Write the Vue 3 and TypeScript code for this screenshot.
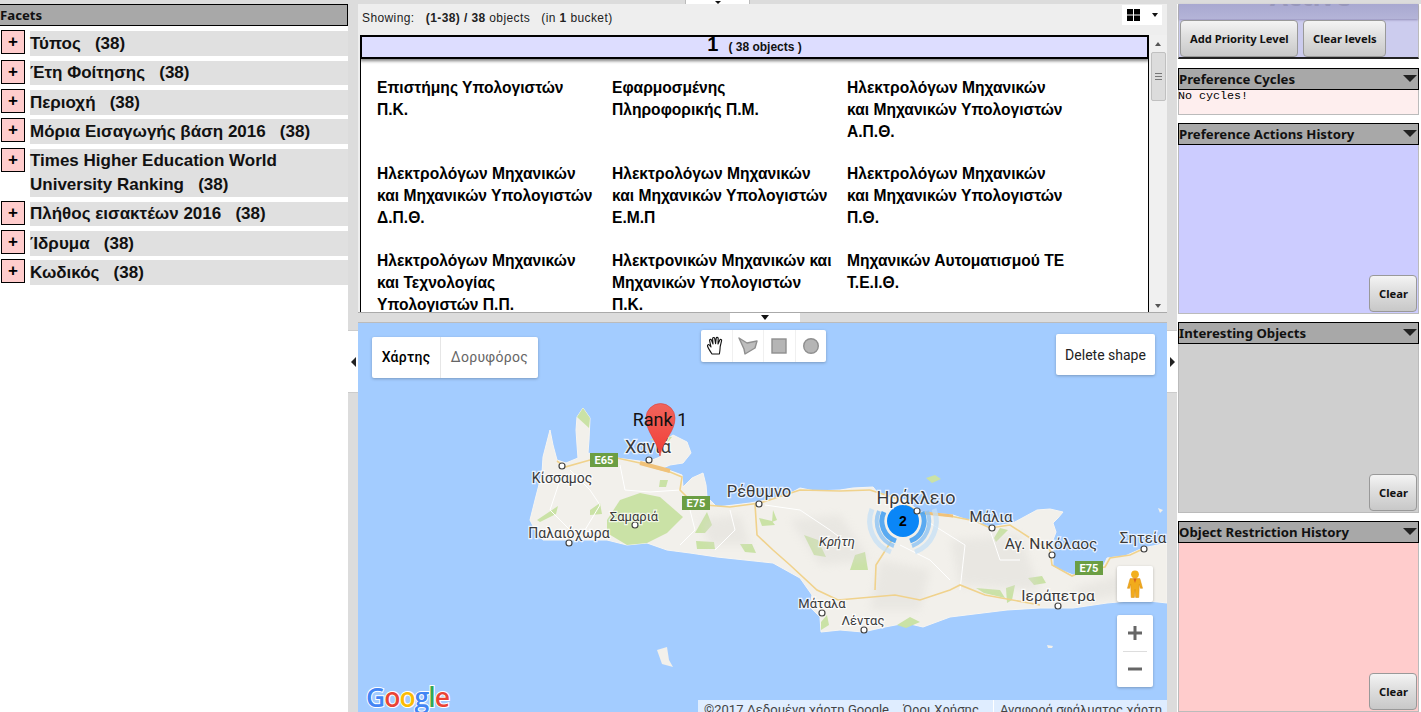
<script setup lang="ts">
interface Facet { name: string; count: number }
interface MapLabel { text: string; x: number; y: number; size: number; italic?: boolean }

const facets: Facet[] = [
  { name: 'Τύπος', count: 38 },
  { name: 'Έτη Φοίτησης', count: 38 },
  { name: 'Περιοχή', count: 38 },
  { name: 'Μόρια Εισαγωγής βάση 2016', count: 38 },
  { name: 'Times Higher Education World University Ranking', count: 38 },
  { name: 'Πλήθος εισακτέων 2016', count: 38 },
  { name: 'Ίδρυμα', count: 38 },
  { name: 'Κωδικός', count: 38 },
]

const objects: string[] = [
  'Επιστήμης Υπολογιστών Π.Κ.',
  'Εφαρμοσμένης Πληροφορικής Π.Μ.',
  'Ηλεκτρολόγων Μηχανικών και Μηχανικών Υπολογιστών Α.Π.Θ.',
  'Ηλεκτρολόγων Μηχανικών και Μηχανικών Υπολογιστών Δ.Π.Θ.',
  'Ηλεκτρολόγων Μηχανικών και Μηχανικών Υπολογιστών Ε.Μ.Π',
  'Ηλεκτρολόγων Μηχανικών και Μηχανικών Υπολογιστών Π.Θ.',
  'Ηλεκτρολόγων Μηχανικών και Τεχνολογίας Υπολογιστών Π.Π.',
  'Ηλεκτρονικών Μηχανικών και Μηχανικών Υπολογιστών Π.Κ.',
  'Μηχανικών Αυτοματισμού ΤΕ Τ.Ε.Ι.Θ.',
]

const crete =
  'M550 430 L553 445 L557 460 L566 463 L578 458 L577 445 L576 430 L577 417 L583 408 L590 418 L589 440 L588 453 L600 456 L617 458 L647 462 L660 457 L663 442 L673 435 L687 442 L691 453 L683 463 L670 465 L663 468 L682 475 L683 487 L692 478 L703 473 L706 485 L707 497 L717 507 L750 503 L783 497 L800 488 L815 491 L840 490 L853 488 L873 487 L878 493 L890 496 L905 500 L920 512 L953 515 L973 522 L990 527 L1013 523 L1037 510 L1050 509 L1063 512 L1058 518 L1053 523 L1056 532 L1053 540 L1053 567 L1073 575 L1103 567 L1107 558 L1125 556 L1143 548 L1167 543 L1167 603 L1140 600 L1107 603 L1073 608 L1040 608 L1007 610 L950 617 L923 627 L906 623 L885 627 L863 632 L840 630 L821 632 L820 617 L810 607 L812 595 L800 578 L773 563 L745 560 L717 557 L690 553 L667 550 L647 543 L627 545 L607 540 L570 540 L543 540 L535 530 L530 520 L535 500 L542 473 L543 457 Z'

const shades: string[] = [
  'M700 520 L740 515 L750 545 L710 545 Z',
  'M790 520 L840 515 L870 560 L820 565 Z',
  'M950 540 L1020 535 L1040 590 L960 585 Z',
  'M1070 590 L1120 575 L1150 590 L1090 600 Z',
  'M880 560 L930 570 L920 610 L870 610 Z',
]

const greens: string[] = [
  'M577 417 L583 408 L590 418 L589 428 Z',
  'M607 520 L620 500 L640 493 L660 497 L683 517 L667 533 L647 543 L627 545 L607 533 Z',
  'M537 520 L558 506 L556 514 L540 522 Z',
  'M590 510 L600 503 L602 514 L590 515 Z',
  'M660 480 L668 480 L666 487 L659 487 Z',
  'M695 533 L707 512 L712 525 L705 533 Z',
  'M696 541 L714 542 L715 549 L697 549 Z',
  'M740 544 L752 544 L756 553 L745 552 Z',
  'M804 535 L818 540 L826 557 L814 555 Z',
  'M759 518 L772 521 L775 525 L762 526 Z',
  'M773 510 L777 520 L772 522 Z',
  'M926 478 L935 475 L941 479 L932 483 Z',
  'M855 555 L865 552 L868 570 L850 570 Z',
  'M976 588 L1000 590 L1005 598 L984 593 Z',
  'M1006 588 L1015 585 L1012 600 L1007 603 Z',
  'M1028 578 L1042 576 L1046 583 L1034 585 Z',
  'M1008 530 L1000 528 L994 538 L996 542 Z',
  'M897 625 L910 617 L920 622 L906 628 Z',
  'M821 630 L821 622 L827 615 L829 625 Z',
  'M650 440 L660 435 L672 437 L668 442 Z',
]

const roads: string[] = [
  'M557 461 L565 467 L590 460 L617 458 L640 463 L655 468 L670 472 L682 477 L680 490 L690 500 L705 505 L730 507 L760 503 L800 490 L840 491 L870 490',
  'M870 490 L895 498 L920 513 L950 516 L975 521 L990 528 L1010 525 L1030 538 L1050 550 L1052 565 L1072 576 L1085 570',
  'M1085 570 L1105 567 L1110 558 L1130 555 L1145 548',
  'M755 504 L757 535 L773 550 L790 565 L817 590 L838 600 L895 595 L920 600 L950 590 L960 585 L985 595 L1040 605',
  'M892 540 L876 565 L875 590',
]

const whites: string[] = [
  'M570 470 L590 490 L600 505 L585 530',
  'M620 465 L625 490 L650 492 L680 490',
  'M690 510 L695 530 L680 545',
  'M730 510 L735 530 L715 550',
  'M765 505 L800 510 L830 530 L850 545',
  'M925 520 L965 545 L960 590',
  'M990 530 L1000 560 L1020 560',
  'M900 545 L930 560 L950 580',
  'M560 480 L550 510 L570 530',
]

const labels: MapLabel[] = [
  { text: 'Χανιά', x: 648, y: 453, size: 18 },
  { text: 'Κίσσαμος', x: 562, y: 483, size: 14 },
  { text: 'Ρέθυμνο', x: 759, y: 497, size: 16.5 },
  { text: 'Σαμαριά', x: 634, y: 521, size: 13 },
  { text: 'Παλαιόχωρα', x: 569, y: 538, size: 14 },
  { text: 'Κρήτη', x: 837, y: 546, size: 13, italic: true },
  { text: 'Ηράκλειο', x: 916, y: 504, size: 18 },
  { text: 'Μάλια', x: 991, y: 522, size: 15 },
  { text: 'Αγ. Νικόλαος', x: 1051, y: 549, size: 15.5 },
  { text: 'Σητεία', x: 1143, y: 543, size: 15 },
  { text: 'Ιεράπετρα', x: 1058, y: 601, size: 15.5 },
  { text: 'Μάταλα', x: 822, y: 608, size: 13 },
  { text: 'Λέντας', x: 863, y: 625, size: 13 },
]

const dots: [number, number][] = [
  [649, 460], [562, 466], [759, 504], [635, 525], [569, 543], [917, 511],
  [992, 528], [1052, 555], [1144, 549], [1058, 606], [822, 613], [864, 630],
]

const shields: { x: number; y: number }[] = [
  { x: 590, y: 453 },
  { x: 682, y: 496 },
  { x: 1075, y: 561 },
]
</script>

<template>
  <div class="page">
    <aside class="facets">
      <div class="bar">Facets</div>
      <div v-for="f in facets" :key="f.name" class="facet">
        <button class="plus">+</button>
        <div class="facet-name">{{ f.name }}&nbsp;&nbsp; ({{ f.count }})</div>
      </div>
    </aside>

    <div class="gutter">
      <div class="gutter-tab"><span class="arrow-left"></span></div>
    </div>

    <main class="center">
      <div class="top-tab"><span class="arrow-down"></span></div>
      <div class="results-head">
        <span>Showing:&nbsp;&nbsp; <b>(1-38) / 38</b> objects &nbsp; (in <b>1</b> bucket)</span>
        <div class="view-switch">
          <svg width="13" height="12" viewBox="0 0 13 12">
            <path d="M0 0h6v5.5H0zM7 0h6v5.5H7zM0 6.5h6V12H0zM7 6.5h6V12H7z" fill="#000" />
          </svg>
          <span class="arrow-down"></span>
        </div>
      </div>
      <div class="results">
        <div class="results-main">
          <div class="bucket">
            <span class="bucket-num">1</span>
            <span class="bucket-count">( 38 objects )</span>
          </div>
          <div class="objects">
            <div v-for="o in objects" :key="o" class="object">{{ o }}</div>
          </div>
        </div>
        <div class="scrollbar">
          <span class="sb-up"></span>
          <div class="sb-thumb"><i></i><i></i><i></i></div>
          <span class="sb-down"></span>
        </div>
      </div>
      <div class="split">
        <div class="split-tab"><span class="arrow-down"></span></div>
      </div>

      <div class="map">
        <svg class="map-canvas" width="809" height="389" viewBox="358 323 809 389">
          <defs>
            <filter id="soft" x="-5%" y="-5%" width="110%" height="110%">
              <feGaussianBlur stdDeviation="0.7" />
            </filter>
            <filter id="softer" x="-20%" y="-20%" width="140%" height="140%">
              <feGaussianBlur stdDeviation="4" />
            </filter>
            <linearGradient id="pin" x1="0" y1="0" x2="0" y2="1">
              <stop offset="0" stop-color="#f0645c" />
              <stop offset="1" stop-color="#f23e36" />
            </linearGradient>
          </defs>

          <g filter="url(#soft)">
            <path :d="crete" fill="#f2f0eb" stroke="#f7f5f1" stroke-width="1" stroke-linejoin="round" />
            <path d="M657 650 L667 647 L669 660 L673 667 L662 664 Z" fill="#f2f0eb" />
            <path d="M1047 645 L1053 646 L1052 648 L1048 648 Z" fill="#f2f0eb" />
            <path d="M1158 508 L1163 510 L1160 513 Z" fill="#f2f0eb" />
            <path v-for="g in greens" :key="g" :d="g" fill="#cae2a6" />
          </g>
          <g filter="url(#softer)" opacity=".4">
            <path v-for="s in shades" :key="s" :d="s" fill="#dcdad5" />
          </g>
          <path v-for="w in whites" :key="w" :d="w" fill="none" stroke="#fff" stroke-width="1" />
          <path v-for="r in roads" :key="r" :d="r" fill="none" stroke="#f0d28c" stroke-width="1.6" />
          <path d="M640 463 L670 471" fill="none" stroke="#f0c27a" stroke-width="4" />
          <path d="M925 513 L953 516" fill="none" stroke="#f0c27a" stroke-width="3" />

          <g fill="none">
            <path d="M896 541 A 21 21 0 0 1 884 512 M922 512 A 21 21 0 0 1 910 541" stroke="#3f9df2" stroke-width="5" opacity=".85" />
            <path d="M894 546 A 26 26 0 0 1 879 511 M927 511 A 26 26 0 0 1 912 546" stroke="#8cc3f4" stroke-width="4" opacity=".8" />
            <path d="M891 552 A 33 33 0 0 1 872 509 M934 509 A 33 33 0 0 1 915 552" stroke="#c6e0f6" stroke-width="5" opacity=".75" />
          </g>
          <circle cx="903" cy="521" r="16" fill="#0a86f7" />
          <text x="903" y="526" class="cluster">2</text>

          <g v-for="s in shields" :key="s.x">
            <rect :x="s.x" :y="s.y" width="28" height="14" fill="#6b9e43" />
            <text :x="s.x + 14" :y="s.y + 11" class="shield-text">{{ s.x === 590 ? 'E65' : 'E75' }}</text>
          </g>
          <circle v-for="d in dots" :key="d[0]" :cx="d[0]" :cy="d[1]" r="3" fill="#fff" stroke="#444" stroke-width="1.2" />
          <text
            v-for="l in labels"
            :key="l.text"
            class="map-label"
            :x="l.x"
            :y="l.y"
            :font-size="l.size"
            :font-style="l.italic ? 'italic' : 'normal'"
          >{{ l.text }}</text>

          <path d="M660 456 C657 440 646 432 646 418 A14.5 14.5 0 0 1 675 418 C675 432 663 440 660 456 Z" fill="url(#pin)" stroke="#d8403a" stroke-width="0.6" />
          <text x="660" y="426" class="rank">Rank 1</text>

          <text x="366" y="707" class="google">
            <tspan fill="#4285f4">G</tspan><tspan fill="#ea4335">o</tspan><tspan fill="#fbbc05">o</tspan><tspan fill="#4285f4">g</tspan><tspan fill="#34a853">l</tspan><tspan fill="#ea4335">e</tspan>
          </text>
        </svg>

        <div class="map-type">
          <div class="map-type-item active">Χάρτης</div>
          <div class="map-type-item">Δορυφόρος</div>
        </div>

        <div class="draw-tools">
          <div class="tool">
            <svg width="20" height="22" viewBox="0 0 20 22" fill="#fff" stroke="#111" stroke-width="1.1" stroke-linejoin="round">
              <path d="M6 19 C4 16 2 13 1.5 11 C1.2 9.5 2.6 9.2 3.5 10.2 L5 12 L3.6 5.6 C3.3 4.2 5 3.8 5.5 5.2 L7 9 L6.6 3.6 C6.5 2.2 8.4 2 8.7 3.4 L9.6 8.6 L10.2 3.2 C10.4 1.9 12.2 2.1 12.2 3.5 L12 9 L13.8 5 C14.4 3.8 16 4.4 15.6 5.7 L14.2 11.5 C14 14 14 16 13.4 19 Z" />
            </svg>
          </div>
          <div class="tool">
            <svg width="20" height="18" viewBox="0 0 20 18">
              <path d="M1 1 L9 6 L19 4 L17 11 L7 17 L6 12 Z" fill="#bdbdbd" stroke="#8f8f8f" stroke-width="1.4" stroke-linejoin="round" />
            </svg>
          </div>
          <div class="tool">
            <svg width="16" height="16" viewBox="0 0 16 16">
              <rect x="1" y="1" width="14" height="14" fill="#b5b5b5" stroke="#8f8f8f" stroke-width="1.4" />
            </svg>
          </div>
          <div class="tool">
            <svg width="18" height="18" viewBox="0 0 18 18">
              <circle cx="9" cy="9" r="7.3" fill="#b5b5b5" stroke="#8f8f8f" stroke-width="1.4" />
            </svg>
          </div>
        </div>

        <div class="delete-shape">Delete shape</div>

        <div class="pegman">
          <svg width="18" height="28" viewBox="0 0 16 26">
            <circle cx="8" cy="4" r="3.6" fill="#f2b01e" />
            <path d="M3.5 8 H12.5 L15 17 H13 L12 13 L11.5 25.5 H8.6 L8 18 L7.4 25.5 H4.5 L4 13 L3 17 H1 Z" fill="#f2ab1c" stroke="#d98f10" stroke-width=".5" />
            <path d="M6.5 8 L8 12 L9.5 8 Z" fill="#d9641e" />
          </svg>
        </div>

        <div class="zoom-ctl">
          <div class="zoom-btn">
            <svg width="14" height="14" viewBox="0 0 14 14"><path d="M5.5 0h3v5.5H14v3H8.5V14h-3V8.5H0v-3h5.5z" fill="#666" /></svg>
          </div>
          <div class="zoom-sep"></div>
          <div class="zoom-btn">
            <svg width="14" height="14" viewBox="0 0 14 14"><path d="M0 5.5h14v3H0z" fill="#666" /></svg>
          </div>
        </div>

        <div class="attribution">
          <span>©2017 Δεδομένα χάρτη Google</span>
          <span>Όροι Χρήσης</span>
          <span class="report">Αναφορά σφάλματος χάρτη</span>
        </div>
      </div>
    </main>

    <div class="gutter">
      <div class="gutter-tab"><span class="arrow-right"></span></div>
    </div>

    <aside class="side">
      <section class="levels">
        <div class="levels-head"><span class="ghost">Active</span></div>
        <div class="levels-btns">
          <button class="btn">Add Priority Level</button>
          <button class="btn">Clear levels</button>
        </div>
      </section>

      <section class="panel cycles">
        <div class="bar">Preference Cycles<span class="bar-arrow"></span></div>
        <div class="panel-body"><pre>No cycles!</pre></div>
      </section>

      <section class="panel actions">
        <div class="bar">Preference Actions History<span class="bar-arrow"></span></div>
        <div class="panel-body"><button class="btn clear">Clear</button></div>
      </section>

      <section class="panel interesting">
        <div class="bar">Interesting Objects<span class="bar-arrow"></span></div>
        <div class="panel-body"><button class="btn clear">Clear</button></div>
      </section>

      <section class="panel restriction">
        <div class="bar">Object Restriction History<span class="bar-arrow"></span></div>
        <div class="panel-body"><button class="btn clear">Clear</button></div>
      </section>
    </aside>
  </div>
</template>

<style>
html, body { margin: 0; overflow: hidden; background: #fff; }
</style>

<style scoped>
* { box-sizing: border-box; }

.page {
  display: grid;
  grid-template-columns: 348px 10px 809px 10px 242px 2px;
  height: 712px;
  width: 1421px;
  overflow: hidden;
  padding-top: 4px;
  background: #fff;
  font-family: "Liberation Sans", Arial, sans-serif;
  color: #000;
  position: relative;
}
.page::before {
  content: "";
  position: absolute;
  left: 0;
  right: 0;
  top: 0;
  height: 4px;
  background: #dcdcdc;
}

.bar {
  height: 22px;
  border: 1px solid #000;
  background: #a8a8a8;
  font: bold 13.2px/20px "Noto Sans", sans-serif;
  color: #111;
  position: relative;
}
.bar-arrow {
  position: absolute;
  right: 1px;
  top: 6px;
  border-left: 7px solid transparent;
  border-right: 7px solid transparent;
  border-top: 7px solid #222;
}

.facets {
  display: flex;
  flex-direction: column;
}
.facets .bar { border-left: 0; margin-bottom: .7px; }
.facet {
  display: flex;
  align-items: flex-start;
  margin-top: 3.7px;
}
.plus {
  width: 24px;
  height: 24px;
  margin: 0 5px 0 1px;
  padding: 0;
  border: 1px solid #000;
  background: #ffcccc;
  font: bold 17px/20px "Liberation Sans", sans-serif;
  flex: none;
}
.facet-name {
  flex: 1;
  margin-top: 1px;
  padding-top: .6px;
  background: #e0e0e0;
  font-weight: bold;
  font-size: 17px;
  line-height: 24px;
  color: #111;
}

.gutter {
  background: #dcdcdc;
  padding-top: 326px;
}
.gutter-tab {
  height: 63px;
  background: #fff;
  display: flex;
  align-items: center;
  justify-content: center;
  border-top: 1px solid #ccc;
  border-bottom: 1px solid #ccc;
}
.arrow-left {
  border-top: 5px solid transparent;
  border-bottom: 5px solid transparent;
  border-right: 5px solid #222;
}
.arrow-right {
  border-top: 5px solid transparent;
  border-bottom: 5px solid transparent;
  border-left: 5px solid #222;
}
.arrow-down {
  display: inline-block;
  border-left: 4.5px solid transparent;
  border-right: 4.5px solid transparent;
  border-top: 5px solid #111;
}

.center {
  display: flex;
  flex-direction: column;
  min-width: 0;
  height: 708px;
  position: relative;
}
.top-tab {
  position: absolute;
  left: 327px;
  top: -4px;
  width: 65px;
  height: 4px;
  background: #fff;
  border-left: 1px solid #bbb;
  border-right: 1px solid #bbb;
  display: flex;
  justify-content: center;
  align-items: flex-end;
  overflow: hidden;
}
.top-tab .arrow-down {
  border-left-width: 3px;
  border-right-width: 3px;
  border-top-width: 3px;
}
.results-head {
  height: 31px;
  flex: none;
  background: #eee;
  display: flex;
  justify-content: space-between;
  padding: 0 5px 0 4px;
  font-size: 12px;
  letter-spacing: .4px;
  line-height: 29px;
  color: #222;
}
.view-switch {
  margin-top: 1px;
  width: 40px;
  height: 20px;
  background: #fff;
  display: flex;
  align-items: center;
  gap: 12px;
  padding-left: 5px;
}
.view-switch .arrow-down {
  border-left-width: 3.5px;
  border-right-width: 3.5px;
  border-top-width: 4px;
}
.results {
  height: 278px;
  flex: none;
  display: flex;
  background: #eee;
  padding-left: 2px;
  border-bottom: 1px solid #aaa;
}
.results-main {
  width: 789px;
  display: flex;
  flex-direction: column;
  min-height: 0;
  overflow: hidden;
  background: #fff;
  border-left: 1px solid #000;
  border-right: 1px solid #000;
}
.bucket {
  height: 24px;
  flex: none;
  margin-left: -1px;
  margin-right: -1px;
  border: 2px solid #000;
  background: #ddddff;
  box-shadow: 0 2px 3px rgba(0, 0, 0, .5);
  text-align: center;
  line-height: 15px;
}
.bucket-num { font-size: 20px; font-weight: bold; margin-right: 10px; }
.bucket-count { font-size: 12px; font-weight: bold; color: #111; }
.objects {
  display: grid;
  grid-template-columns: repeat(3, 235px);
  grid-auto-rows: 86.7px;
  padding: 17.6px 0 0 16px;
}
.object {
  font-size: 15.6px;
  font-weight: bold;
  line-height: 22px;
  color: #000;
  width: 221px;
}
.scrollbar {
  width: 17px;
  margin-left: 1px;
  background: #f0f0f0;
  position: relative;
}
.sb-up, .sb-down {
  position: absolute;
  left: 5px;
  border-left: 3.5px solid transparent;
  border-right: 3.5px solid transparent;
}
.sb-up { top: 7px; border-bottom: 4px solid #555; }
.sb-down { bottom: 4px; border-top: 4px solid #555; }
.sb-thumb {
  position: absolute;
  top: 17px;
  left: 1px;
  width: 15px;
  height: 49px;
  background: #dcdcdc;
  border: 1px solid #c0c0c0;
  border-radius: 2px;
  display: flex;
  flex-direction: column;
  align-items: center;
  justify-content: center;
  gap: 2px;
}
.sb-thumb i {
  display: block;
  width: 7px;
  height: 1px;
  background: #777;
}
.split {
  height: 10px;
  flex: none;
  background: #dcdcdc;
  border-bottom: 1px solid #bbb;
}
.split-tab {
  width: 70px;
  height: 9px;
  margin-left: 372px;
  background: #fff;
  display: flex;
  align-items: center;
  justify-content: center;
}

.map {
  flex: 1;
  min-height: 0;
  position: relative;
  overflow: hidden;
  background: #a3ccff;
  font-family: Roboto, sans-serif;
}
.map-canvas { position: absolute; left: 0; top: 0; }
.map-label {
  font-family: Roboto, sans-serif;
  text-anchor: middle;
  fill: #3a3a3a;
  stroke: rgba(255, 255, 255, .75);
  stroke-width: 2.5px;
  paint-order: stroke;
}
.shield-text {
  font: bold 11px Roboto, sans-serif;
  fill: #fff;
  text-anchor: middle;
}
.rank {
  font: 18px Roboto, sans-serif;
  fill: #111;
  text-anchor: middle;
}
.cluster {
  font: bold 14px "Liberation Sans", sans-serif;
  fill: #000;
  text-anchor: middle;
}
.google {
  font: 600 26.5px "Open Sans", sans-serif;
  letter-spacing: -1px;
  stroke: #fff;
  stroke-width: 2px;
  paint-order: stroke;
}

.map-type {
  position: absolute;
  left: 14px;
  top: 14px;
  height: 41px;
  display: flex;
  background: #fff;
  border-radius: 2px;
  box-shadow: 0 1px 3px rgba(0, 0, 0, .25);
  font-size: 14px;
  letter-spacing: .3px;
  line-height: 41px;
  color: #666;
}
.map-type-item { width: 97px; text-align: center; }
.map-type-item.active {
  width: 69px;
  color: #000;
  font-weight: 500;
  border-right: 1px solid #e6e6e6;
}
.draw-tools {
  position: absolute;
  left: 343px;
  top: 7px;
  height: 32px;
  width: 125px;
  display: flex;
  background: #fff;
  border-radius: 2px;
  box-shadow: 0 1px 3px rgba(0, 0, 0, .25);
}
.tool {
  flex: 1;
  display: flex;
  align-items: center;
  justify-content: center;
  border-right: 1px solid #f0f0f0;
}
.tool:last-child { border-right: 0; }
.delete-shape {
  position: absolute;
  left: 698px;
  top: 11px;
  width: 99px;
  height: 41px;
  background: #fff;
  border-radius: 2px;
  box-shadow: 0 1px 3px rgba(0, 0, 0, .25);
  text-align: center;
  font-size: 14px;
  line-height: 42px;
  color: #222;
}
.pegman {
  position: absolute;
  left: 759px;
  top: 243px;
  width: 36px;
  height: 36px;
  background: #fff;
  border-radius: 2px;
  box-shadow: 0 1px 3px rgba(0, 0, 0, .25);
  display: flex;
  align-items: center;
  justify-content: center;
}
.zoom-ctl {
  position: absolute;
  left: 759px;
  top: 292px;
  width: 36px;
  height: 72px;
  background: #fff;
  border-radius: 2px;
  box-shadow: 0 1px 3px rgba(0, 0, 0, .25);
  display: flex;
  flex-direction: column;
}
.zoom-btn {
  flex: 1;
  display: flex;
  align-items: center;
  justify-content: center;
}
.zoom-sep {
  height: 1px;
  margin: 0 6px;
  background: #ddd;
}
.attribution {
  position: absolute;
  right: 0;
  bottom: 0;
  width: 469px;
  height: 12px;
  background: rgba(255, 255, 255, .65);
  display: flex;
  font-size: 13px;
  line-height: 19px;
  color: #444;
  white-space: nowrap;
  padding-left: 6px;
}
.attribution span { margin-right: 14px; }
.attribution .report {
  margin: 0;
  padding-left: 6px;
  border-left: 1px solid #fff;
}

.side {
  display: flex;
  flex-direction: column;
  padding-left: 1px;
  font-family: "Noto Sans", sans-serif;
}
.levels {
  height: 55px;
  flex: none;
  background: #ccccee;
  border: 1px solid #bbb;
  border-top: 0;
  border-bottom: 2px solid #222;
  margin-bottom: 9px;
  position: relative;
}
.levels-head {
  height: 15px;
  background: linear-gradient(#a8a8d0, #b4b4d8);
  box-shadow: 0 1px 2px rgba(90, 80, 130, .5);
  overflow: hidden;
  text-align: center;
  padding-left: 24px;
}
.ghost {
  display: block;
  margin-top: -22px;
  font: bold 26px/28px "Noto Sans", sans-serif;
  color: #9797bb;
}
.levels-btns {
  display: flex;
  gap: 5px;
  padding: 1px 0 0 1px;
}
.btn {
  height: 37px;
  padding: 0 9px;
  border: 1px solid #999;
  border-radius: 4px;
  background: linear-gradient(#f4f4f4, #e0e0e0 40%, #c8c8c8);
  font: bold 11.2px "Noto Sans", sans-serif;
  color: #111;
  white-space: nowrap;
}
.levels-btns .btn:first-child { width: 118px; }
.levels-btns .btn:last-child { width: 83px; }
.panel {
  display: flex;
  flex-direction: column;
  flex: none;
  margin-bottom: 8px;
}
.panel .bar { flex: none; height: 21.5px; line-height: 20px; }
.panel-body {
  flex: 1;
  position: relative;
  border: 1px solid #bbb;
  border-top: 0;
  display: flex;
  justify-content: flex-end;
  align-items: flex-end;
  padding: 0 1px 1px 0;
}
.panel-body pre {
  margin: 0 auto 0 -1px;
  align-self: flex-start;
  font: 11.7px/13px "Liberation Mono", monospace;
}
.clear { width: 48px; }
.cycles { height: 47px; }
.cycles .panel-body { background: #feeeee; }
.actions { height: 191px; }
.actions .panel-body { background: #ccccff; }
.interesting { height: 191px; }
.interesting .panel-body { background: #cfcfcf; }
.restriction { height: 191px; }
.restriction .panel-body { background: #ffcccc; }
</style>
